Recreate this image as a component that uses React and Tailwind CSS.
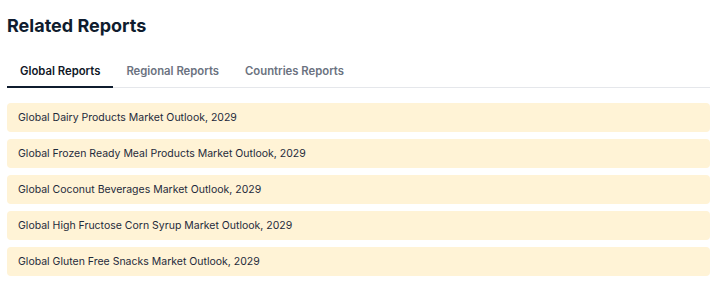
import React, { useState } from "react";

const tabs = ["Global Reports", "Regional Reports", "Countries Reports"];

const reports = [
  "Global Dairy Products Market Outlook, 2029",
  "Global Frozen Ready Meal Products Market Outlook, 2029",
  "Global Coconut Beverages Market Outlook, 2029",
  "Global High Fructose Corn Syrup Market Outlook, 2029",
  "Global Gluten Free Snacks Market Outlook, 2029",
];

const App = () => {
  const [active, setActive] = useState(0);

  return (
    <div className="w-[721px] h-[288px] bg-white pl-[7px] pr-[11px] pt-[13px] font-['Inter',sans-serif]">
      <h2 className="text-[18px] leading-[26px] font-bold text-[#0f1c2e]">Related Reports</h2>

      <div className="mt-[19px] flex border-b border-[#e5e7eb]">
        {tabs.map((t, i) => (
          <button
            key={t}
            onClick={() => setActive(i)}
            className={
              i === active
                ? "px-[13px] pt-[5px] pb-[7px] text-[11.3px] leading-[16px] font-semibold text-[#111827] border-b-2 border-[#0f1c2e] -mb-px"
                : "px-[13px] pt-[5px] pb-[7px] text-[11.3px] leading-[16px] font-semibold text-[#6b7280] border-b-2 border-transparent -mb-px"
            }
          >
            {t}
          </button>
        ))}
      </div>

      <div className="mt-[15px] flex flex-col gap-[7px]">
        {reports.map((r) => (
          <a
            key={r}
            href="#"
            className="block h-[29px] rounded-[4px] bg-[#fff3d6] px-[11px] text-[10.5px] leading-[29px] text-[#1e2a3b]"
          >
            {r}
          </a>
        ))}
      </div>
    </div>
  );
};

export default App;
